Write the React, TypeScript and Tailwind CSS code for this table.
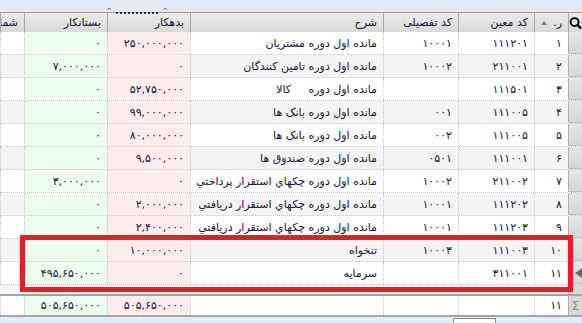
const cols = [
  { w: "w-[24px]", bg: "" },
  { w: "w-[83px]", bg: "bg-[#edfdec]" },
  { w: "w-[83px]", bg: "bg-[#fdeceb]" },
  { w: "w-[193px]", bg: "" },
  { w: "w-[75px]", bg: "" },
  { w: "w-[76px]", bg: "" },
  { w: "w-[34px]", bg: "" },
];

const headers = ["شماره", "بستانکار", "بدهکار", "شرح", "کد تفصیلی", "کد معین", "ر."];

const rows: string[][] = [
  ["", "۰", "۲۵۰,۰۰۰,۰۰۰", "مانده اول دوره مشتریان", "۱۰۰۰۱", "۱۱۱۲۰۱", "۱"],
  ["", "۷,۰۰۰,۰۰۰", "۰", "مانده اول دوره تامین کنندگان", "۱۰۰۰۲", "۲۱۱۰۰۱", "۲"],
  ["", "۰", "۵۲,۷۵۰,۰۰۰", "مانده اول دوره\u00a0\u00a0\u00a0\u00a0 کالا", "", "۱۱۱۵۰۱", "۳"],
  ["", "۰", "۹۹,۰۰۰,۰۰۰", "مانده اول دوره بانک ها", "۰۰۱", "۱۱۱۰۰۵", "۴"],
  ["", "۰", "۸۰,۰۰۰,۰۰۰", "مانده اول دوره بانک ها", "۰۰۲", "۱۱۱۰۰۵", "۵"],
  ["", "۰", "۹,۵۰۰,۰۰۰", "مانده اول دوره صندوق ها", "۰۵۰۱", "۱۱۱۰۰۱", "۶"],
  ["", "۳,۰۰۰,۰۰۰", "۰", "مانده اول دوره چکهاي استقرار پرداختي", "۱۰۰۰۲", "۲۱۱۰۰۲", "۷"],
  ["", "۰", "۲,۰۰۰,۰۰۰", "مانده اول دوره چکهاي استقرار دريافتي", "۱۰۰۰۱", "۱۱۱۲۰۲", "۸"],
  ["", "۰", "۲,۴۰۰,۰۰۰", "مانده اول دوره چکهاي استقرار دريافتي", "۱۰۰۰۱", "۱۱۱۲۰۳", "۹"],
  ["", "۰", "۱۰,۰۰۰,۰۰۰", "تنخواه", "۱۰۰۰۳", "۱۱۱۰۰۳", "۱۰"],
  ["", "۴۹۵,۶۵۰,۰۰۰", "۰", "سرمايه", "", "۳۱۱۰۰۱", "۱۱"],
];

const footer = ["", "۵۰۵,۶۵۰,۰۰۰", "۵۰۵,۶۵۰,۰۰۰", "", "", "", "۱۱"];

function Cell({ i, text, rowBg }: { i: number; text: string; rowBg: string }) {
  const c = cols[i];
  return (
    <div
      dir="rtl"
      className={`${c.w} ${c.bg || rowBg} h-full shrink-0 flex items-center px-[6px] border-l border-dotted border-[#c4c4cc] overflow-hidden whitespace-nowrap text-[#14143a]`}
    >
      {text}
    </div>
  );
}

export default function App() {
  return (
    <div
      className="w-[582px] h-[323px] overflow-hidden bg-[#e6e9f1] relative text-[11px] leading-none"
      style={{ fontFamily: '"DejaVu Sans", sans-serif' }}
    >
      <div className="h-[12px] relative">
        <div className="absolute left-[106px] top-[8px] w-[62px] flex items-end justify-between text-[#333]">
          <span className="text-[7px] leading-none">^</span>
          <span className="flex-1 mx-[4px] border-b-2 border-dotted border-[#303050] mb-[1px]" />
          <span className="text-[7px] leading-none">^</span>
        </div>
      </div>

      {/* header */}
      <div className="flex h-[20px] border-t border-[#9a9a9a] bg-gradient-to-b from-[#ececec] to-[#d9d9d9] text-[#101030]">
        {headers.map((h, i) => (
          <div
            key={i}
            dir="rtl"
            className={`${cols[i].w} shrink-0 h-full flex items-center px-[6px] gap-[6px] overflow-hidden whitespace-nowrap border-l border-[#a8a8a8]`}
          >
            <span>{h}</span>
            {i === 6 && (
              <svg width="9" height="6" viewBox="0 0 9 6">
                <path d="M4.5 0 L9 6 L0 6 Z" fill="#7d7a9a" />
              </svg>
            )}
          </div>
        ))}
        <div className="w-[14px] shrink-0 flex items-center justify-center border-l border-[#a8a8a8]">
          <svg width="14" height="14" viewBox="0 0 14 14">
            <circle cx="6" cy="6" r="4.3" fill="none" stroke="#000" strokeWidth="2" />
            <path d="M9 9 L13 13" stroke="#000" strokeWidth="2.4" />
          </svg>
        </div>
      </div>

      {/* body */}
      <div className="bg-white">
        {rows.map((r, ri) => {
          const rowBg = ri % 2 === 1 ? "bg-[#f4f4f4]" : "bg-white";
          return (
            <div key={ri} className={`flex h-[23px] border-b border-dotted border-[#c4c4cc] ${rowBg}`}>
              {r.map((t, i) => (
                <Cell key={i} i={i} text={t} rowBg={rowBg} />
              ))}
              <div className="w-[14px] shrink-0 h-full bg-gradient-to-b from-[#e6e6e6] to-[#d6d6d6] border-l border-[#b0b0b0] border-b border-b-[#c0c0c0] flex items-center justify-end">
                {ri === 10 && (
                  <svg width="7" height="10" viewBox="0 0 7 10">
                    <path d="M0 5 L7 0 L7 10 Z" fill="#6a6a6a" />
                  </svg>
                )}
              </div>
            </div>
          );
        })}
      </div>

      <div className="h-[9px] bg-[#f4f4f4] flex">
        <div className="flex-1" />
        <div className="w-[14px] bg-[#d8d8d8] border-l border-[#b0b0b0]" />
      </div>

      {/* footer */}
      <div className="flex h-[23px] border-t-2 border-b-2 border-[#a4a4a4] bg-white">
        {footer.map((t, i) => (
          <Cell key={i} i={i} text={t} rowBg="bg-white" />
        ))}
        <div className="w-[14px] shrink-0 h-full bg-[#d8d8d8] border-l border-[#b0b0b0] flex items-center justify-center text-[#888] text-[12px]">
          Σ
        </div>
      </div>

      <div className="h-[6px] bg-[#e3ecf9] relative">
        <div className="absolute left-[453px] top-[1px] w-[43px] h-[8px] bg-white border border-[#8a8a8a]" />
      </div>

      {/* highlight */}
      <div className="absolute left-[20px] top-[235px] w-[553px] h-[57px] border-[5px] border-[#ec1c24] pointer-events-none" />
    </div>
  );
}
